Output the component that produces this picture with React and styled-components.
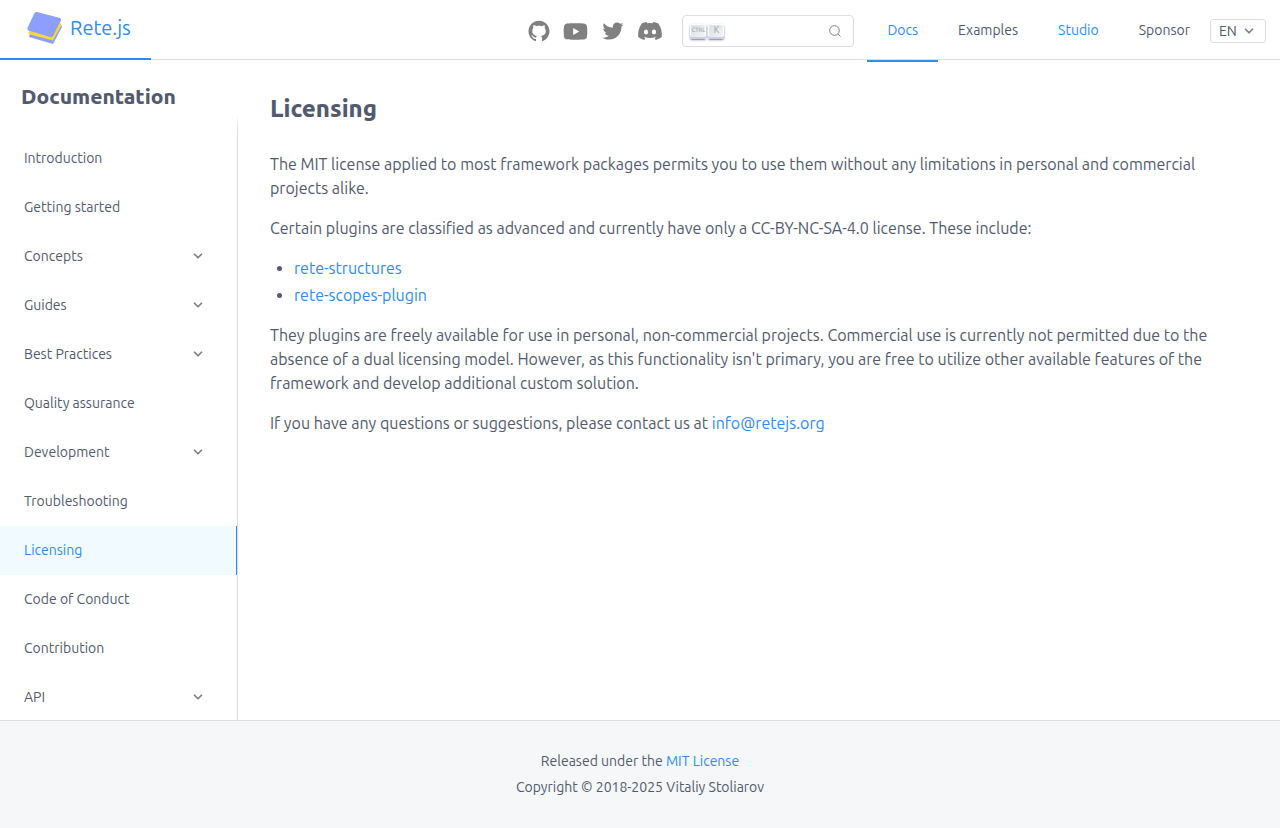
import React from 'react';
import styled, { createGlobalStyle } from 'styled-components';
import { AiOutlineGithub, AiFillYoutube, AiOutlineTwitter } from 'react-icons/ai';
import { FaDiscord } from 'react-icons/fa';
import { LuChevronDown } from 'react-icons/lu';

const blue = '#2d8cf0';
const text = '#515a6e';
const line = '#dcdee2';

const GlobalStyle = createGlobalStyle`
  *, *::before, *::after { box-sizing: border-box; }
  body {
    margin: 0;
    font-family: Ubuntu, 'Noto Sans', sans-serif;
    font-size: 16px;
    line-height: 24px;
    color: ${text};
    background: #fff;
  }
  a { color: ${blue}; text-decoration: none; }
  h1, h2 { font-weight: 800; }
`;

const Page = styled.div`
  display: flex;
  flex-direction: column;
  min-height: 100vh;
`;

const Header = styled.header`
  display: flex;
  justify-content: space-between;
  height: 60px;
  padding-right: 14px;
  border-bottom: 1px solid ${line};
`;

const Brand = styled.a`
  display: flex;
  align-items: center;
  gap: 8px;
  height: 60px;
  padding: 0 20px 2px 27px;
  border-bottom: 2px solid ${blue};
  font-size: 20px;
`;

const HeaderSide = styled.div`
  display: flex;
  align-items: center;
  height: 62px;
`;

const Socials = styled.div`
  display: flex;
  align-items: center;
  margin-right: 14px;
`;

const SocialLink = styled.a`
  display: flex;
  justify-content: center;
  width: 37px;
  color: #808080;
`;

const SearchBox = styled.label`
  display: flex;
  align-items: center;
  width: 172px;
  height: 32px;
  margin-right: 13px;
  padding: 0 12px 0 7px;
  border: 1px solid ${line};
  border-radius: 4px;
`;

const Key = styled.kbd`
  display: flex;
  align-items: center;
  justify-content: center;
  flex: none;
  width: 16px;
  height: 15px;
  margin-right: 2px;
  padding-bottom: 3px;
  border-radius: 2px;
  background: linear-gradient(-225deg, #d5dbe4, #f8f8f8);
  box-shadow: inset 0 -2px 0 0 #cdcde6, inset 0 0 1px 1px #fff, 0 1px 2px 0 rgba(30, 35, 90, 0.6);
  color: #969faf;
  font-family: ${(p) => (p.$small ? "'Ubuntu Condensed', 'Liberation Sans Narrow', 'DejaVu Sans Condensed', sans-serif" : 'inherit')};
  font-size: ${(p) => (p.$small ? 6 : 9)}px;
  line-height: 10px;
`;

const SearchInput = styled.input`
  flex: 1;
  min-width: 0;
  border: 0;
  outline: 0;
  background: transparent;
  font: inherit;
`;

const Nav = styled.nav`
  display: flex;
`;

const NavLink = styled.a`
  display: flex;
  align-items: center;
  height: 62px;
  padding: 0 20px;
  border-bottom: 2px solid ${(p) => (p.$active ? blue : 'transparent')};
  color: ${(p) => (p.$accent || p.$active ? blue : text)};
  font-size: 14px;
`;

const LanguageWrap = styled.div`
  display: grid;
  align-items: center;
  width: 56px;
  height: 24px;
  svg { grid-area: 1 / 1; justify-self: end; margin-right: 10px; pointer-events: none; }
`;

const Language = styled.select`
  grid-area: 1 / 1;
  appearance: none;
  width: 100%;
  height: 24px;
  padding: 0 8px;
  border: 1px solid ${line};
  border-radius: 3px;
  background: #fff;
  color: ${text};
  font-family: inherit;
  font-size: 14px;
`;

const Body = styled.div`
  display: flex;
  flex: 1;
`;

const Sidebar = styled.aside`
  display: flex;
  flex-direction: column;
  flex: none;
  width: 238px;
  height: calc(100vh - 168px);
`;

const SidebarTitle = styled.h2`
  margin: 0;
  padding: 24px 21px 26px;
  font-size: 21px;
  line-height: 24px;
`;

const Menu = styled.ul`
  flex: 1;
  min-height: 0;
  margin: -18px 0 0;
  padding: 18px 0 0;
  overflow: hidden auto;
  scrollbar-width: none;
  list-style: none;
  border-right: 1px solid;
  border-image: linear-gradient(#fff, ${line} 16px) 1;
`;

const MenuLink = styled.a`
  display: flex;
  align-items: center;
  justify-content: space-between;
  height: 49px;
  padding: 0 31px 2px 24px;
  border-right: 1px solid ${(p) => (p.$active ? blue : 'transparent')};
  background: ${(p) => (p.$active ? '#f0faff' : 'transparent')};
  color: ${(p) => (p.$active ? blue : text)};
  font-size: 14px;
`;

const Chevron = styled(LuChevronDown).attrs({ size: 14, 'aria-hidden': true })`
  color: #808080;
  stroke-width: 3;
`;

const Article = styled.main`
  flex: 1;
  min-width: 0;
  padding: 32px;
  h1 { margin: 0 0 26px; font-size: 24px; line-height: 34px; }
  p { margin: 0 0 16px; }
`;

const PluginList = styled.ul`
  margin: 0 0 16px;
  padding-left: 24px;
  li + li { margin-top: 3px; }
`;

const Footer = styled.footer`
  padding: 27px 20px 28px;
  border-top: 1px solid ${line};
  background: #f5f7f9;
  text-align: center;
  font-size: 14px;
  line-height: 26px;
`;

const menu = [
  ['Introduction'], ['Getting started'], ['Concepts', true], ['Guides', true],
  ['Best Practices', true], ['Quality assurance'], ['Development', true],
  ['Troubleshooting'], ['Licensing'], ['Code of Conduct'], ['Contribution'], ['API', true],
];

function Logo() {
  return (
    <svg width="35" height="34" viewBox="0 0 35 34" aria-hidden="true">
      <path d="M3 22L2 26L26 33L35 16L33 13Z" fill="#8c9eff" />
      <path d="M2 19L1.500 23L26 29.500L34.500 14L33 11Z" fill="#fdd835" />
      <path d="M10 1L33 7Q34.500 8 34 9.500L26 25Q25 26.500 23 26L1.500 19.500Q0 19 0.500 17L7.500 2Q8.500 0.500 10 1Z" fill="#8c9eff" />
    </svg>
  );
}

export default function App() {
  return (
    <Page>
      <GlobalStyle />
      <Header>
        <Brand href="#"><Logo />Rete.js</Brand>
        <HeaderSide>
          <Socials>
            <SocialLink href="#github" aria-label="GitHub"><AiOutlineGithub size={24} /></SocialLink>
            <SocialLink href="#youtube" aria-label="YouTube"><AiFillYoutube size={27} /></SocialLink>
            <SocialLink href="#twitter" aria-label="Twitter"><AiOutlineTwitter size={26} /></SocialLink>
            <SocialLink href="#discord" aria-label="Discord"><FaDiscord size={26} /></SocialLink>
          </Socials>
          <SearchBox>
            <Key $small>CTRL</Key>
            <Key>K</Key>
            <SearchInput type="search" aria-label="Search" />
            <svg width="12" height="12" viewBox="0 0 12 12" fill="none" stroke="#808080" aria-hidden="true">
              <circle cx="5.500" cy="5.500" r="4.800" />
              <path d="M9 9L11.500 11.500" />
            </svg>
          </SearchBox>
          <Nav>
            <NavLink href="#docs" $active>Docs</NavLink>
            <NavLink href="#examples">Examples</NavLink>
            <NavLink href="#studio" $accent>Studio</NavLink>
            <NavLink href="#sponsor">Sponsor</NavLink>
          </Nav>
          <LanguageWrap>
            <Language aria-label="Language"><option>EN</option></Language>
            <Chevron />
          </LanguageWrap>
        </HeaderSide>
      </Header>
      <Body>
        <Sidebar>
          <SidebarTitle>Documentation</SidebarTitle>
          <Menu>
            {menu.map(([label, group]) => (
              <li key={label}>
                <MenuLink href="#" $active={label === 'Licensing'}>
                  {label}
                  {group && <Chevron />}
                </MenuLink>
              </li>
            ))}
          </Menu>
        </Sidebar>
        <Article>
          <h1>Licensing</h1>
          <p>The MIT license applied to most framework packages permits you to use them without any limitations in personal and commercial projects alike.</p>
          <p>Certain plugins are classified as advanced and currently have only a CC-BY-NC-SA-4.0 license. These include:</p>
          <PluginList>
            <li><a href="#structures">rete-structures</a></li>
            <li><a href="#scopes">rete-scopes-plugin</a></li>
          </PluginList>
          <p>They plugins are freely available for use in personal, non-commercial projects. Commercial use is currently not permitted due to the absence of a dual licensing model. However, as this functionality isn't primary, you are free to utilize other available features of the framework and develop additional custom solution.</p>
          <p>If you have any questions or suggestions, please contact us at <a href="mailto:info@retejs.org">info@retejs.org</a></p>
        </Article>
      </Body>
      <Footer>
        <div>Released under the <a href="#license">MIT License</a></div>
        <div>Copyright © 2018-2025 Vitaliy Stoliarov</div>
      </Footer>
    </Page>
  );
}
